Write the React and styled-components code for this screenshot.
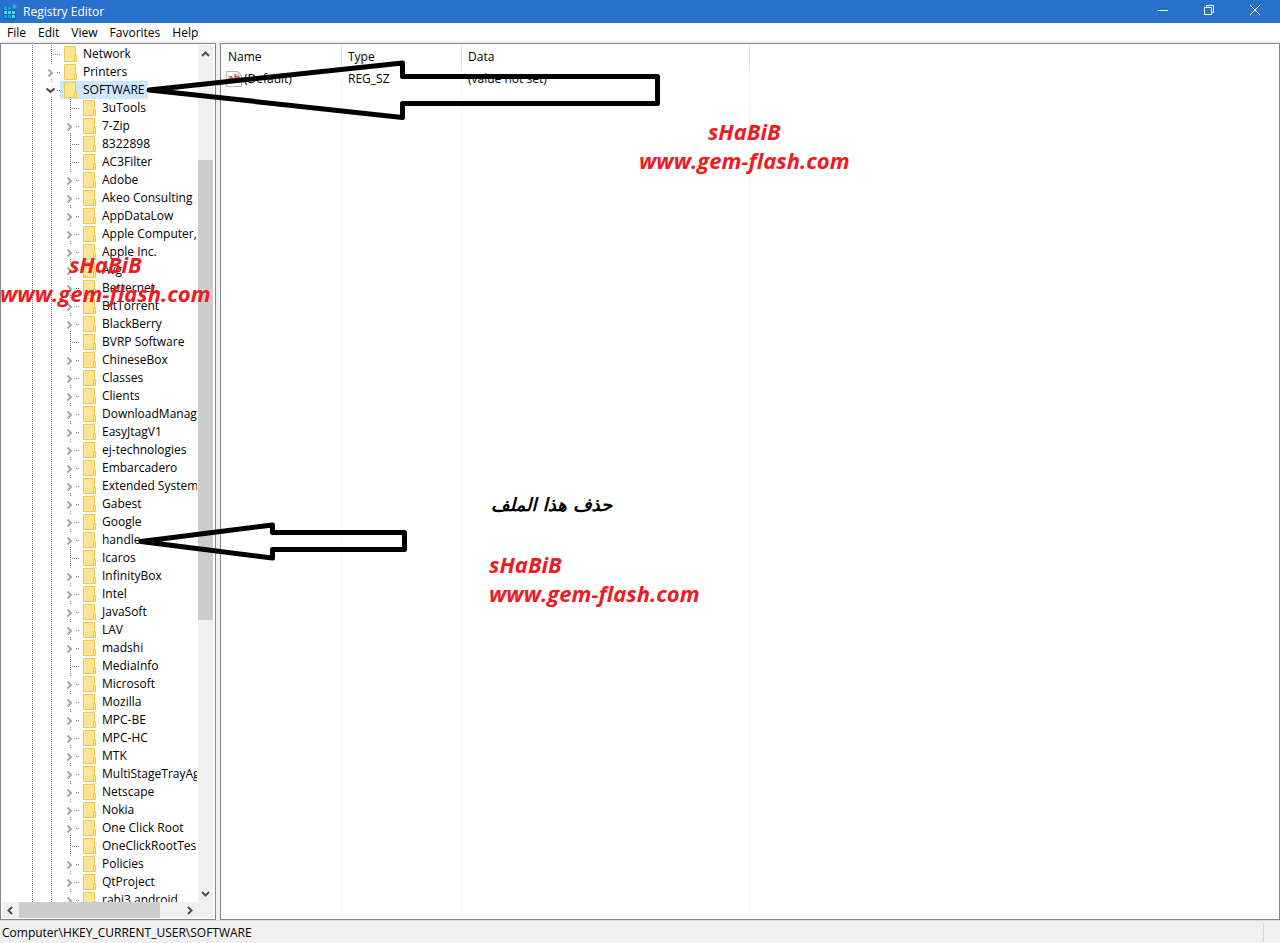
import React from 'react'
import styled, { createGlobalStyle } from 'styled-components'

const GlobalStyle = createGlobalStyle`
  * {
    box-sizing: border-box;
  }
  body {
    margin: 0;
    background: #f0f0f0;
    color: #000;
    font-family: 'Open Sans', 'Noto Sans', sans-serif;
    font-size: 12px;
    line-height: 18px;
  }
  button {
    border: 0;
    padding: 0;
    margin: 0;
    background: transparent;
    color: inherit;
    font: inherit;
  }
`

const Window = styled.div`
  position: relative;
  display: flex;
  flex-direction: column;
  height: 100vh;
  overflow: hidden;
`

const TitleBar = styled.header`
  display: flex;
  align-items: center;
  height: 23px;
  flex: none;
  padding: 0 2px;
  background: #2872cc;
  color: #fff;
  svg {
    display: block;
  }
`

const Title = styled.h1`
  flex: 1;
  margin: 0 0 0 5px;
  font-size: 12px;
  font-weight: 400;
`

const WindowButton = styled.button`
  display: flex;
  align-items: flex-start;
  justify-content: center;
  width: 46px;
  height: 23px;
  padding-top: 5px;
`

const MenuBar = styled.nav`
  display: flex;
  flex: none;
  height: 18px;
  padding-left: 1px;
  background: #fff;
`

const MenuItem = styled.button`
  padding: 1px 6px 0;
  line-height: 18px;
`

const Panels = styled.main`
  display: grid;
  grid-template-columns: 216px 1fr;
  gap: 4px;
  flex: 1;
  min-height: 0;
  margin-top: 2px;
`

const Panel = styled.section`
  min-width: 0;
  min-height: 0;
  border: 1px solid #828790;
  padding: 1px;
  background: #fff;
`

const TreePanel = styled(Panel)`
  display: grid;
  grid-template-columns: 1fr 15px;
  grid-template-rows: 1fr 16px;
  padding-right: 2px;
`

const Tree = styled.ul`
  min-height: 0;
  overflow: hidden;
  margin: 0 1px 0 0;
  padding: 0 0 0 20px;
  list-style: none;
`

const Row = styled.li`
  display: flex;
  height: 18px;
  white-space: nowrap;
  svg {
    flex: none;
  }
`

const Label = styled.span`
  display: flex;
  align-items: center;
  padding: 0 4px;
  background: ${p => p.$selected ? '#cce8ff' : 'transparent'};
  svg {
    margin-right: 6px;
  }
`

const ScrollBar = styled.div`
  display: flex;
  flex-direction: ${p => p.$vertical ? 'column' : 'row'};
  background: #f0f0f0;
`

const ScrollButton = styled.button`
  display: flex;
  align-items: center;
  justify-content: center;
  flex: 0 0 17px;
`

const Track = styled.div`
  flex: ${p => p.$size} 0 0;
`

const Thumb = styled(Track)`
  background: #cdcdcd;
`

const Corner = styled.div`
  background: #f0f0f0;
`

const Values = styled.table`
  width: 100%;
  height: 100%;
  table-layout: fixed;
  border-collapse: separate;
  border-spacing: 0;
  th, td {
    padding: 0 6px;
    border-right: 1px solid #ecf4fc;
    font-weight: 400;
    text-align: left;
    white-space: nowrap;
  }
  th {
    height: 24px;
    border-color: #e5e5e5;
  }
  td {
    height: 19px;
  }
  th:last-child, td:last-child {
    border-right: 0;
  }
  tr.rest td {
    height: auto;
  }
`

const Col = styled.col`
  width: ${p => p.$width};
`

const ValueName = styled.span`
  display: flex;
  align-items: center;
  gap: 2px;
  svg {
    flex: none;
    margin-left: -2px;
  }
`

const StatusBar = styled.footer`
  display: flex;
  justify-content: space-between;
  flex: none;
  height: 23px;
  padding: 2px 0 1px 2px;
  border-top: 1px solid #d7d7d7;
  line-height: 20px;
`

const Grip = styled.span`
  width: 17px;
  border-left: 1px solid #d7d7d7;
`

const Drawing = styled.svg`
  position: absolute;
  top: 0;
  left: 0;
  pointer-events: none;
`

const Watermark = styled.p`
  position: absolute;
  left: ${p => p.$x}px;
  top: ${p => p.$y}px;
  margin: 0;
  color: #ed1c24;
  font: italic 700 22px/29px 'Open Sans', sans-serif;
  text-align: ${p => p.$align || 'center'};
  white-space: nowrap;
  pointer-events: none;
`

const Note = styled.p`
  position: absolute;
  left: 491px;
  top: 490px;
  margin: 0;
  font: italic 700 18px/29px 'DejaVu Sans', sans-serif;
  white-space: nowrap;
`

// leaf: no expander, closed / open: chevron
const nodes = [
  { name: 'Network', depth: 1, leaf: true },
  { name: 'Printers', depth: 1 },
  { name: 'SOFTWARE', depth: 1, open: true, selected: true },
  { name: '3uTools', leaf: true },
  { name: '7-Zip' },
  { name: '8322898', leaf: true },
  { name: 'AC3Filter', leaf: true },
  { name: 'Adobe' },
  { name: 'Akeo Consulting' },
  { name: 'AppDataLow' },
  { name: 'Apple Computer, Inc.' },
  { name: 'Apple Inc.' },
  { name: 'Avg' },
  { name: 'Betternet' },
  { name: 'BitTorrent' },
  { name: 'BlackBerry' },
  { name: 'BVRP Software', leaf: true },
  { name: 'ChineseBox' },
  { name: 'Classes' },
  { name: 'Clients' },
  { name: 'DownloadManager' },
  { name: 'EasyJtagV1' },
  { name: 'ej-technologies' },
  { name: 'Embarcadero' },
  { name: 'Extended Systems' },
  { name: 'Gabest' },
  { name: 'Google' },
  { name: 'handle' },
  { name: 'Icaros', leaf: true },
  { name: 'InfinityBox' },
  { name: 'Intel' },
  { name: 'JavaSoft' },
  { name: 'LAV' },
  { name: 'madshi' },
  { name: 'MediaInfo', leaf: true },
  { name: 'Microsoft' },
  { name: 'Mozilla' },
  { name: 'MPC-BE' },
  { name: 'MPC-HC' },
  { name: 'MTK' },
  { name: 'MultiStageTrayAgent' },
  { name: 'Netscape' },
  { name: 'Nokia' },
  { name: 'One Click Root' },
  { name: 'OneClickRootTest', leaf: true },
  { name: 'Policies' },
  { name: 'QtProject' },
  { name: 'rabi3.android' }
]

const Guide = () => (
  <svg width="19" height="18" aria-hidden="true">
    <path d="M10.5 0V18" stroke="#808080" strokeDasharray="1 1" />
  </svg>
)

const Branch = ({ leaf, open }) => (
  <svg width="19" height="18" fill="none" aria-hidden="true">
    {leaf
      ? <path d="M10.5 0V18M12 9.5H19" stroke="#808080" strokeDasharray="1 1" />
      : <path d="M10.5 0V1M10.5 16V17M16 9.5H17M18 9.5H19" stroke="#808080" />}
    {!leaf && !open && <path d="M7.5 6.5L11 10L7.5 13.5" stroke="#a6a6a6" strokeWidth="2" />}
    {open && <path d="M5.5 7.5L9.5 11L13.5 7.5" stroke="#404040" strokeWidth="2" />}
  </svg>
)

const Folder = () => (
  <svg width="13" height="16" aria-hidden="true">
    <path d="M0.5 0.5H11.5V15.5H0.5Z" fill="#ffe591" stroke="#ebc954" />
    <path d="M10.5 9.5H12.5V15.5H10.5Z" fill="#ffe591" stroke="#ebc954" />
  </svg>
)

const arrows = {
  up: 'M1 7L4.5 3.5L8 7',
  down: 'M1 3L4.5 6.5L8 3',
  left: 'M6 1L2.5 4.5L6 8',
  right: 'M3 1L6.5 4.5L3 8'
}

const Scroll = ({ dir }) => (
  <ScrollButton type="button" aria-label={`Scroll ${dir}`}>
    <svg width="9" height="9" fill="none">
      <path d={arrows[dir]} stroke="#505050" strokeWidth="2" />
    </svg>
  </ScrollButton>
)

const AppIcon = () => (
  <svg width="16" height="16" aria-hidden="true">
    <path d="M1 3H10V6H14V15H1Z" fill="#0b6aa5" />
    <path d="M2 3h3v3H2zM6 3h3v3H6zM2 11h3v3H2zM6 11h3v3H6z" fill="#12a5dc" />
    <path d="M2 7h3v3H2zM6 7h3v3H6zM10 7h3v3H10zM10 11h3v3H10z" fill="#56d3fa" />
    <path d="M12.5 0L15 2.5L12.5 5L10 2.5Z" fill="#1fb4e8" />
  </svg>
)

const StringIcon = () => (
  <svg width="16" height="16" aria-hidden="true">
    <path d="M0.5 0.5H12L15.5 4V15.5H0.5Z" fill="#fff" stroke="#b4b4b4" />
    <path d="M12 0.5V4H15.5" fill="none" stroke="#b4b4b4" />
    <text x="1" y="11" fill="#d0432a" fontFamily="Open Sans" fontSize="11" fontWeight="700">ab</text>
  </svg>
)

export default () => {
  return (
    <Window>
      <GlobalStyle />
      <TitleBar>
        <AppIcon />
        <Title>Registry Editor</Title>
        <WindowButton type="button" aria-label="Minimize">
          <svg width="10" height="10"><path d="M0 5.5H10" stroke="#fff" /></svg>
        </WindowButton>
        <WindowButton type="button" aria-label="Restore">
          <svg width="10" height="10" fill="none" stroke="#fff">
            <path d="M0.5 2.5H7.5V9.5H0.5ZM2.5 2.5V0.5H9.5V7.5H7.5" />
          </svg>
        </WindowButton>
        <WindowButton type="button" aria-label="Close">
          <svg width="10" height="10"><path d="M0 0L10 10M10 0L0 10" stroke="#fff" /></svg>
        </WindowButton>
      </TitleBar>
      <MenuBar>
        {['File', 'Edit', 'View', 'Favorites', 'Help'].map(item => (
          <MenuItem type="button" key={item}>{item}</MenuItem>
        ))}
      </MenuBar>
      <Panels>
        <TreePanel>
          <Tree>
            {nodes.map(node => (
              <Row key={node.name}>
                <Guide />
                {node.depth !== 1 && <Guide />}
                <Branch leaf={node.leaf} open={node.open} />
                <Label $selected={node.selected}>
                  <Folder />
                  {node.name}
                </Label>
              </Row>
            ))}
          </Tree>
          <ScrollBar $vertical>
            <Scroll dir="up" />
            <Track $size={98} />
            <Thumb $size={460} />
            <Track $size={265} />
            <Scroll dir="down" />
          </ScrollBar>
          <ScrollBar>
            <Scroll dir="left" />
            <Thumb $size={141} />
            <Track $size={21} />
            <Scroll dir="right" />
          </ScrollBar>
          <Corner />
        </TreePanel>
        <Panel>
          <Values>
            <colgroup>
              <Col $width="120px" />
              <Col $width="120px" />
              <Col $width="288px" />
              <Col $width="auto" />
            </colgroup>
            <thead>
              <tr>
                <th>Name</th>
                <th>Type</th>
                <th>Data</th>
                <th />
              </tr>
            </thead>
            <tbody>
              <tr>
                <td><ValueName><StringIcon />(Default)</ValueName></td>
                <td>REG_SZ</td>
                <td>(value not set)</td>
                <td />
              </tr>
              <tr className="rest">
                <td />
                <td />
                <td />
                <td />
              </tr>
            </tbody>
          </Values>
        </Panel>
      </Panels>
      <StatusBar>
        <span>Computer\HKEY_CURRENT_USER\SOFTWARE</span>
        <Grip />
      </StatusBar>
      <Drawing width="670" height="570" fill="none" stroke="#000" strokeWidth="5" strokeLinejoin="round" aria-hidden="true">
        <path d="M149 90L402.5 63V76.5H657.5V103.5H402.5V117.5Z" />
        <path d="M141 541.5L272.5 525V532.5H404.5V549.5H272.5V558Z" />
      </Drawing>
      <Watermark $x={639} $y={117}>sHaBiB<br />www.gem-flash.com</Watermark>
      <Watermark $x={0} $y={250}>sHaBiB<br />www.gem-flash.com</Watermark>
      <Watermark $x={489} $y={550} $align="left">sHaBiB<br />www.gem-flash.com</Watermark>
      <Note lang="ar" dir="rtl">حذف هذا الملف</Note>
    </Window>
  )
}
